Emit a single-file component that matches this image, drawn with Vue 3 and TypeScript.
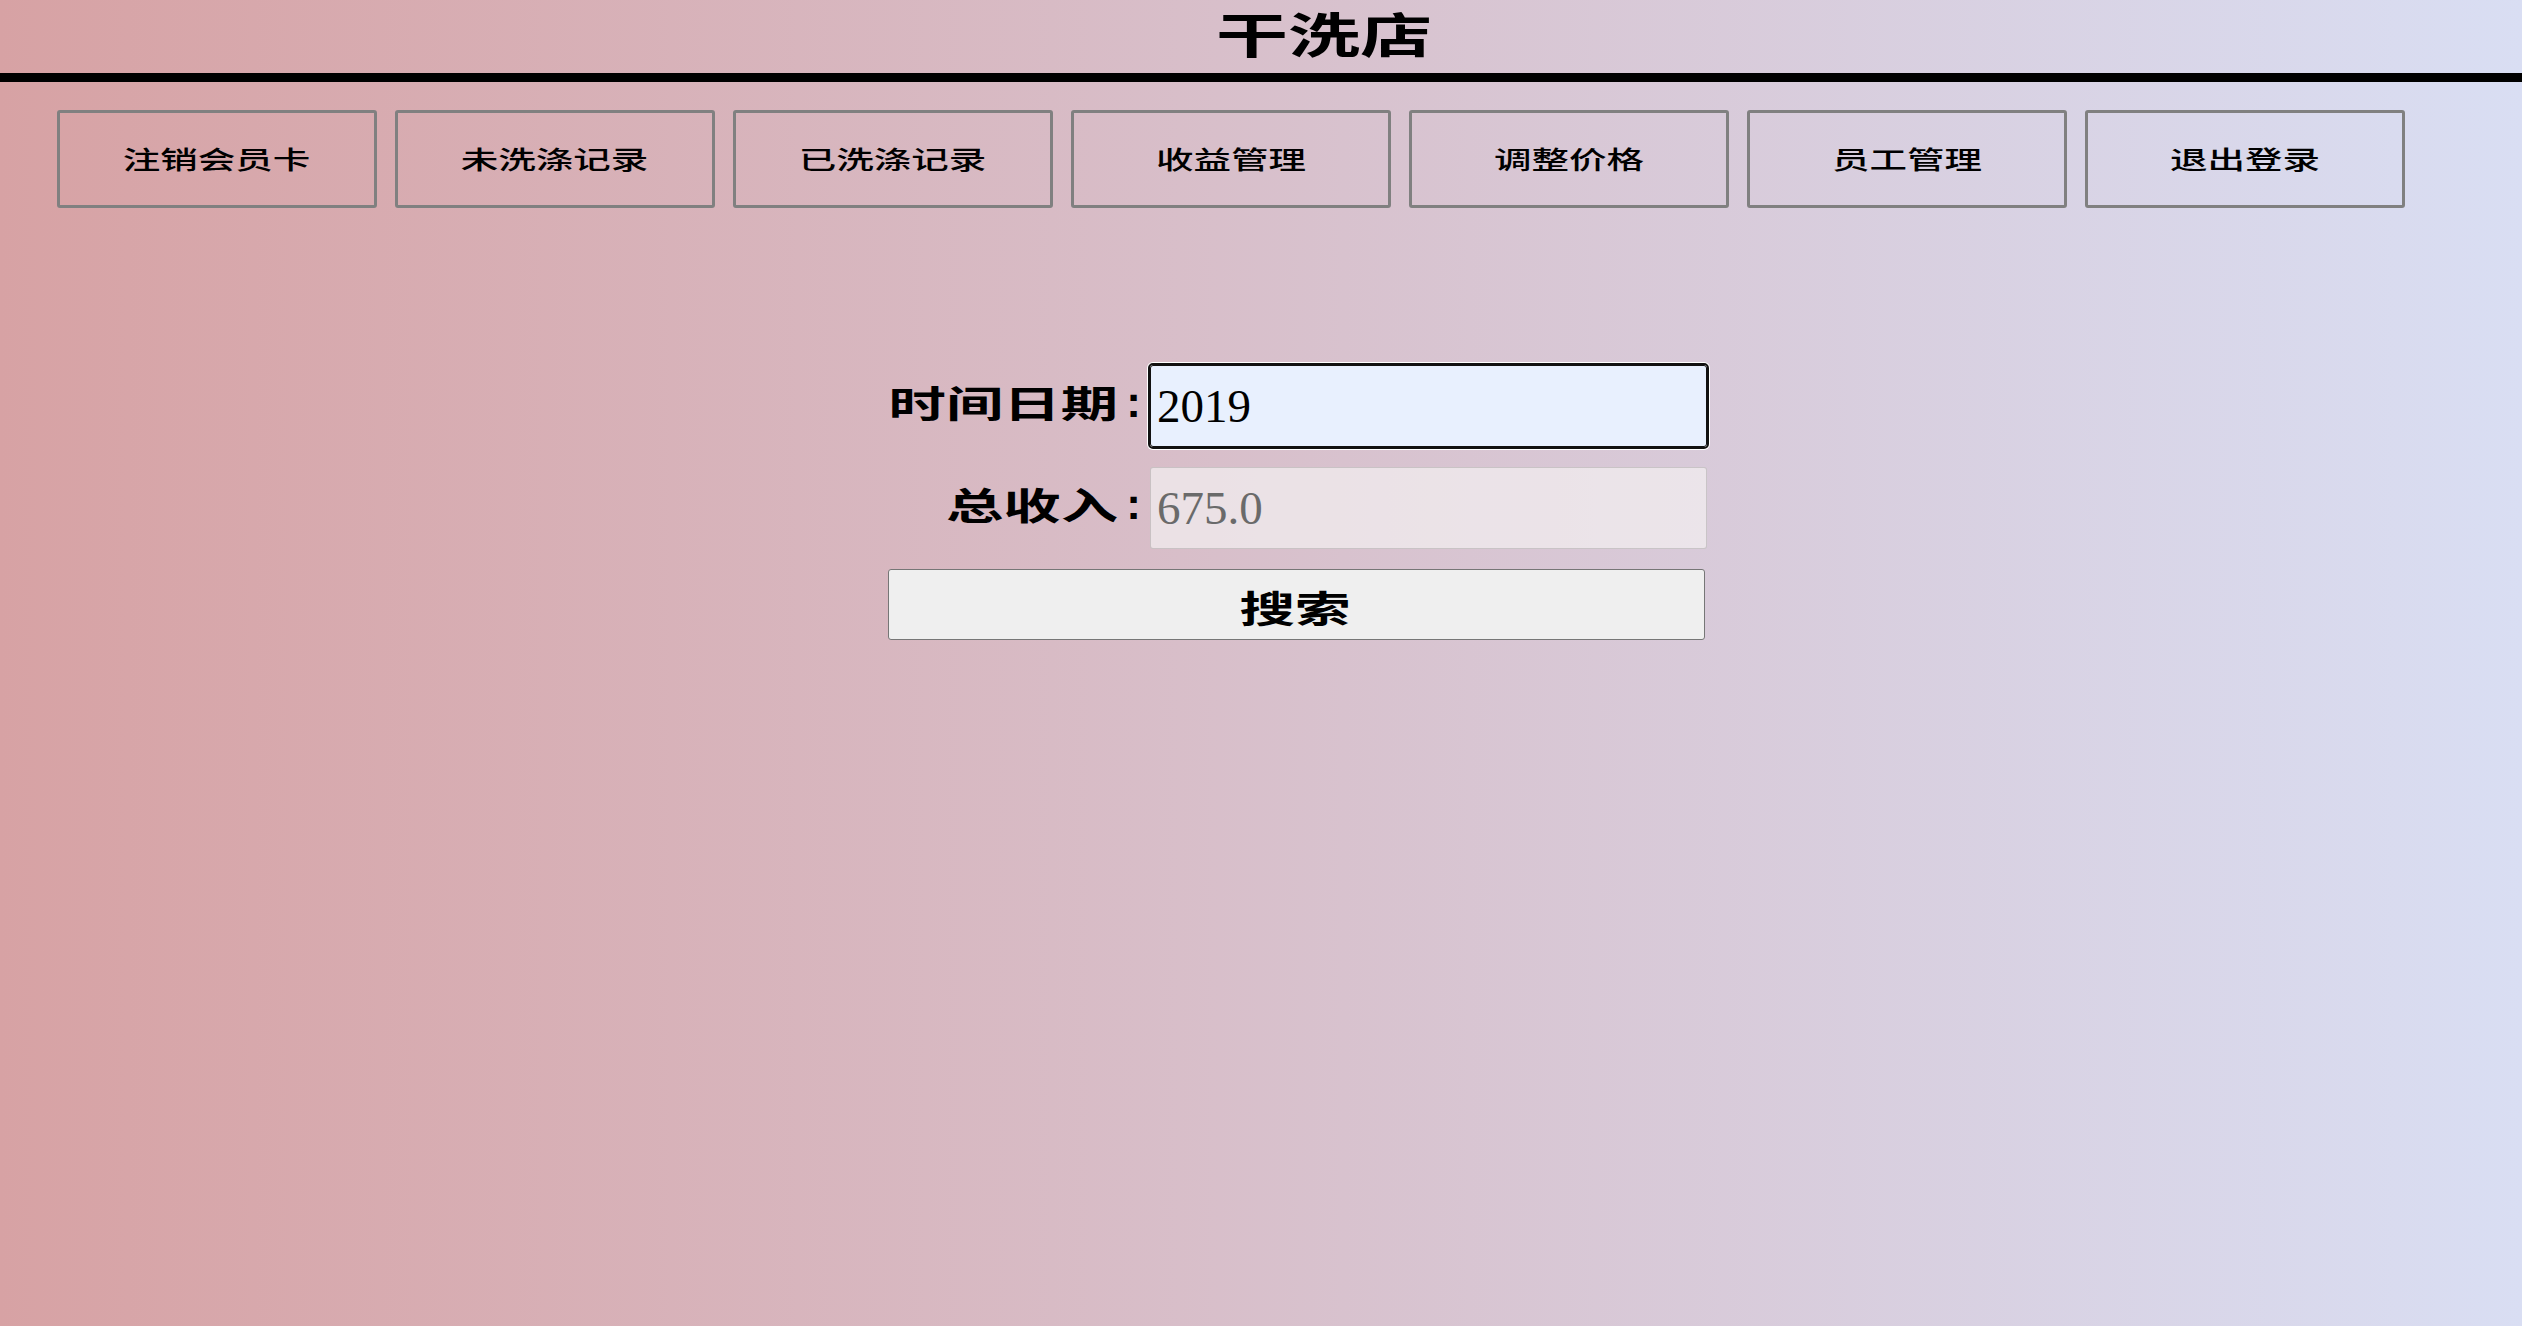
<script setup lang="ts">
const actions: string[] = ['注销会员卡', '未洗涤记录', '已洗涤记录', '收益管理', '调整价格', '员工管理', '退出登录']
</script>

<template>
  <div class="page">
    <header class="top">
      <h1 class="title"><span class="wide">干洗店</span></h1>
    </header>
    <nav class="actions">
      <a v-for="a in actions" :key="a" class="action" href="#"><span class="wide">{{ a }}</span></a>
    </nav>
    <form class="form" @submit.prevent>
      <label class="label" for="date"><span class="wide right">时间日期</span><span class="colon">:</span></label>
      <input id="date" class="field active" type="text" value="2019" />
      <label class="label" for="total"><span class="wide right">总收入</span><span class="colon">:</span></label>
      <input id="total" class="field" type="text" value="675.0" disabled />
      <button class="search" type="submit"><span class="wide">搜索</span></button>
    </form>
  </div>
</template>

<style scoped>
.page {
  min-height: 100vh;
  background: linear-gradient(to right, #d7a2a4, #d9def3);
  font-family: "Noto Sans CJK SC", "Liberation Sans", sans-serif;
  color: #000;
  overflow: hidden;
}
.wide {
  display: inline-block;
  transform: scaleX(1.5);
}
.top {
  height: 73px;
  padding-left: 126px;
  border-bottom: 9px solid #000;
  text-align: center;
}
.title {
  margin: 0;
  font-size: 48px;
  line-height: 64px;
  font-weight: 700;
}
.actions {
  display: flex;
  gap: 18px;
  padding: 28px 0 0 57px;
}
.action {
  box-sizing: border-box;
  width: 320px;
  height: 98px;
  border: 3px solid #808080;
  border-radius: 3px;
  display: flex;
  align-items: center;
  justify-content: center;
  color: #000;
  text-decoration: none;
  font-size: 25px;
  font-weight: 500;
  padding-bottom: 2px;
}
.form {
  display: grid;
  grid-template-columns: 262px 557px;
  row-gap: 20px;
  width: 819px;
  margin: 157px 0 0 888px;
}
.label {
  display: flex;
  align-items: center;
  justify-content: flex-end;
  font-size: 37px;
  font-weight: 700;
  padding-right: 9px;
  padding-bottom: 8px;
}
.right {
  transform: scaleX(1.55);
  transform-origin: right center;
  margin-right: 8px;
}
.colon {
  font-family: "Liberation Sans", sans-serif;
  font-size: 44px;
  line-height: 1;
}
.field {
  box-sizing: border-box;
  width: 557px;
  height: 82px;
  padding: 0 6px;
  font-family: "Liberation Serif", serif;
  font-size: 47px;
  color: #000;
  border: 1px solid rgba(118, 118, 118, 0.3);
  border-radius: 3px;
  background: rgba(242, 238, 240, 0.72);
}
.field:disabled {
  color: #6a6a6a;
}
.active {
  background: #e8f0fe;
  border-color: #111;
  outline: 2px solid #111;
  box-shadow: 0 0 0 3px #fff;
}
.search {
  grid-column: 1 / -1;
  box-sizing: border-box;
  width: 817px;
  height: 71px;
  border: 1.5px solid #767676;
  border-radius: 3px;
  background: #efefef;
  color: #000;
  font-family: inherit;
  font-size: 37px;
  font-weight: 700;
  line-height: 1;
  padding: 5px 3px 0 0;
}
</style>
